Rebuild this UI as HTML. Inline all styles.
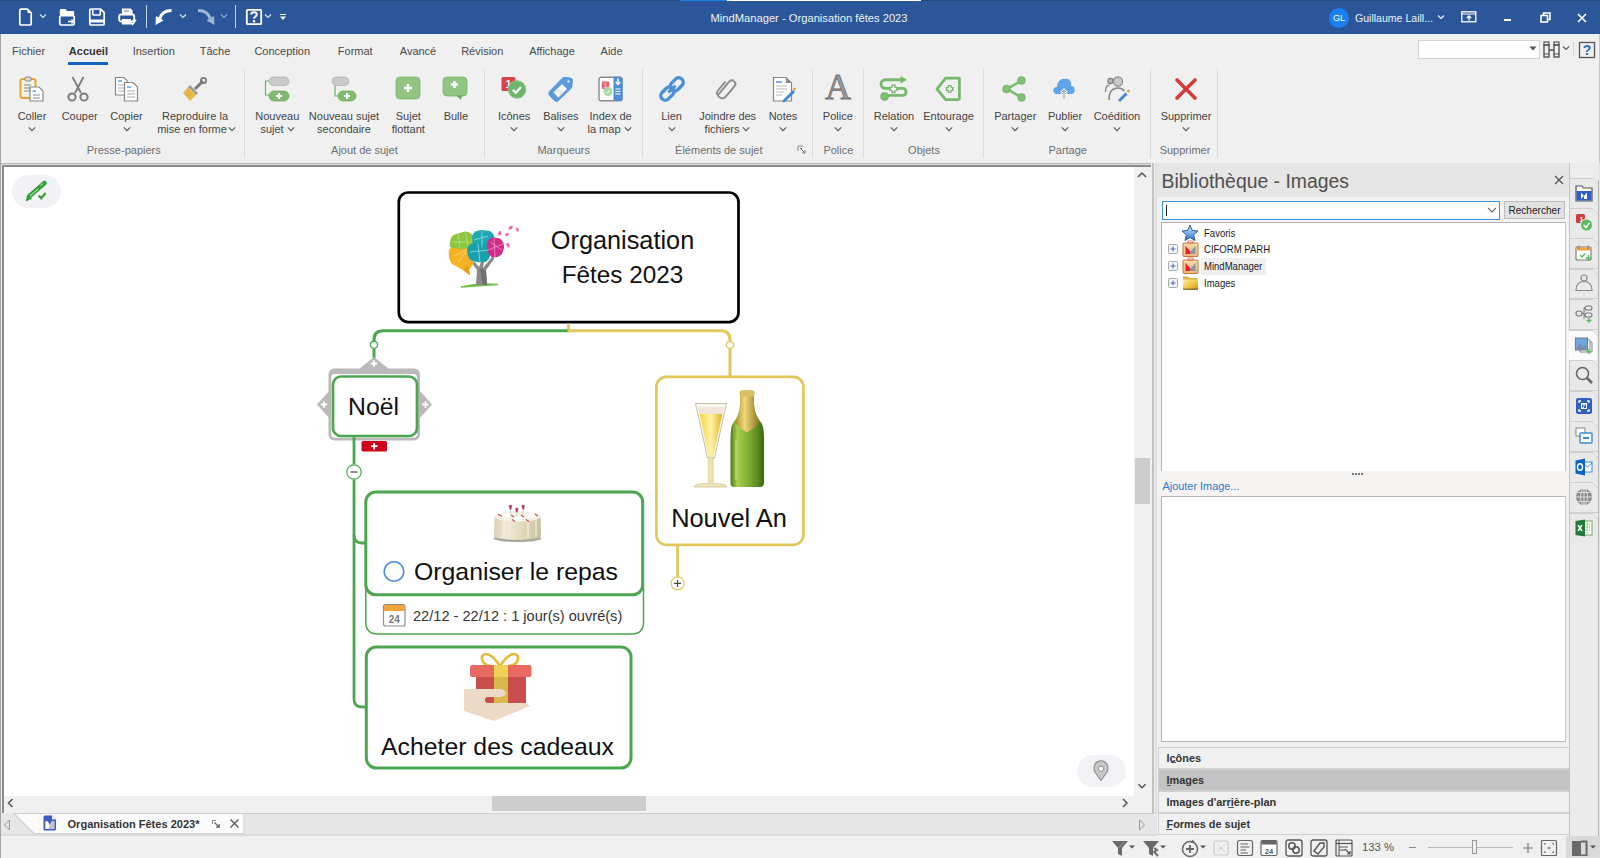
<!DOCTYPE html>
<html><head><meta charset="utf-8">
<style>
*{box-sizing:border-box}
html,body{margin:0;padding:0}
body{width:1600px;height:858px;position:relative;overflow:hidden;background:#f0f0f0;font-family:"Liberation Sans",sans-serif;color:#333}
.a{position:absolute}
.t{position:absolute;white-space:nowrap;line-height:1}
svg{overflow:visible}
</style></head><body>
<div class="a" style="left:0px;top:0px;width:1600px;height:34px;background:#2b579a;"></div>
<div class="a" style="left:0px;top:0px;width:1600px;height:1px;background:#23497f;"></div>
<div class="a" style="left:680px;top:0px;width:47px;height:1px;background:#1b7ee0;"></div>
<div class="a" style="left:727px;top:0px;width:194px;height:1px;background:#ffffff;"></div>
<div class="t" style="left:509.00px;width:600px;text-align:center;top:12.52px;font-size:11.2px;color:#eef2f8;font-weight:normal;">MindManager - Organisation fêtes 2023</div>
<svg class="a" style="left:18px;top:8px" width="16" height="18" viewBox="0 0 16 18"><path d="M1.8 2.5 Q1.8 1.2 3 1.2 H9.5 L13.2 4.9 V15.8 Q13.2 17 12 17 H3 Q1.8 17 1.8 15.8 Z" fill="none" stroke="#fff" stroke-width="1.7" stroke-linejoin="round"/><path d="M9.5 1.2 V4.9 H13.2 Z" fill="#fff"/></svg>
<svg class="a" style="left:37px;top:11px" width="12" height="10" viewBox="0 0 12 10"><path d="M3 3.5 L6 6.5 L9 3.5" fill="none" stroke="#dfe7f3" stroke-width="1.1"/></svg>
<svg class="a" style="left:58px;top:8px" width="18" height="18" viewBox="0 0 18 18"><path d="M1.8 2.2 Q1.8 1 3 1 H7.5 L9 3 H15 Q16.2 3 16.2 4.2 V8.5 H1.8 Z" fill="#fff"/><path d="M1.8 8 V15.8 Q1.8 17 3 17 H15 Q16.2 17 16.2 15.8 V8" fill="none" stroke="#fff" stroke-width="1.7"/><path d="M10 13.5 H15.5 M13.5 11.5 L15.5 13.5 L13.5 15.5" stroke="#fff" stroke-width="1.3" fill="none"/></svg>
<svg class="a" style="left:88px;top:8px" width="18" height="18" viewBox="0 0 18 18"><path d="M1.8 2.2 Q1.8 1 3 1 H12.5 L16.2 4.7 V15.8 Q16.2 17 15 17 H3 Q1.8 17 1.8 15.8 Z" fill="none" stroke="#fff" stroke-width="1.7" stroke-linejoin="round"/><path d="M4.8 1.5 V6.2 Q4.8 7 5.6 7 H11.5 Q12.3 7 12.3 6.2 V1.5" fill="none" stroke="#fff" stroke-width="1.5"/><rect x="2" y="11.5" width="14" height="3" fill="#fff"/></svg>
<svg class="a" style="left:118px;top:8px" width="20" height="18" viewBox="0 0 20 18"><path d="M4.5 6 V1.2 H12.5 L14 2.7 V6" fill="#fff" stroke="#fff" stroke-width="1.2"/><path d="M6 3 H11" stroke="#2b579a" stroke-width="0.8"/><rect x="1.2" y="6.5" width="15" height="7" rx="2" fill="none" stroke="#fff" stroke-width="1.9"/><rect x="4" y="11" width="9" height="5.5" fill="#fff"/><path d="M12.5 14 L14.5 16.5 L18 11.8" fill="none" stroke="#fff" stroke-width="1.6"/></svg>
<div class="a" style="left:146px;top:5px;width:1px;height:23px;background:#c9d5e8;"></div>
<svg class="a" style="left:154px;top:9px" width="20" height="17" viewBox="0 0 20 17"><path d="M17.5 1.5 C11 1.5 7 5 5.5 10" fill="none" stroke="#fff" stroke-width="3.2"/><path d="M1.5 16 L2 7 L9.5 11.5 Z" fill="#fff"/></svg>
<svg class="a" style="left:176.5px;top:10.5px" width="12" height="10" viewBox="0 0 12 10"><path d="M3 3.5 L6 6.5 L9 3.5" fill="none" stroke="#dfe7f3" stroke-width="1.1"/></svg>
<svg class="a" style="left:197px;top:9px" width="20" height="17" viewBox="0 0 20 17"><path d="M1 1.5 C8 1.5 12 5 13.5 10" fill="none" stroke="#9fb5d6" stroke-width="3.2"/><path d="M17.5 16 L17 7 L9.5 11.5 Z" fill="#9fb5d6"/></svg>
<svg class="a" style="left:218px;top:10.5px" width="12" height="10" viewBox="0 0 12 10"><path d="M3 3.5 L6 6.5 L9 3.5" fill="none" stroke="#8ea6cc" stroke-width="1.1"/></svg>
<div class="a" style="left:235px;top:5px;width:1px;height:23px;background:#c9d5e8;"></div>
<svg class="a" style="left:245px;top:8px" width="18" height="18" viewBox="0 0 18 18"><rect x="1.8" y="1.8" width="14.4" height="14.4" rx="1" fill="none" stroke="#fff" stroke-width="1.8"/><path d="M6.2 6.5 C6.2 3.5 11.8 3.5 11.8 6.5 C11.8 8.5 9 8.5 9 10.8" fill="none" stroke="#fff" stroke-width="2"/><circle cx="9" cy="13.2" r="1.2" fill="#fff"/></svg>
<svg class="a" style="left:262px;top:10.5px" width="12" height="10" viewBox="0 0 12 10"><path d="M3 3.5 L6 6.5 L9 3.5" fill="none" stroke="#dfe7f3" stroke-width="1.1"/></svg>
<svg class="a" style="left:279px;top:13px" width="8" height="8" viewBox="0 0 8 8"><path d="M1 1.5 H7" stroke="#fff" stroke-width="1"/><path d="M1 3.5 H7 L4 7 Z" fill="#fff"/></svg>
<svg class="a" style="left:1328px;top:7px" width="22" height="22" viewBox="0 0 22 22"><circle cx="11" cy="11" r="10" fill="#1a7ff0"/><text x="11" y="14.3" text-anchor="middle" font-family="Liberation Sans" font-size="9" fill="#fff">GL</text></svg>
<div class="t" style="left:1355.00px;top:12.57px;font-size:10.55px;color:#eef2f8;font-weight:normal;">Guillaume Laill...</div>
<svg class="a" style="left:1434.5px;top:12px" width="12" height="10" viewBox="0 0 12 10"><path d="M3 3.5 L6 6.5 L9 3.5" fill="none" stroke="#eef2f8" stroke-width="1.2"/></svg>
<svg class="a" style="left:1461px;top:11px" width="16" height="12" viewBox="0 0 16 12"><rect x="0.8" y="0.8" width="14" height="10" fill="none" stroke="#fff" stroke-width="1.3"/><path d="M1 3 H15" stroke="#fff" stroke-width="1"/><path d="M8 9.5 V5 M5.8 7 L8 4.8 L10.2 7" fill="none" stroke="#fff" stroke-width="1.3"/></svg>
<div class="a" style="left:1504px;top:19px;width:7px;height:2px;background:#fff;"></div>
<svg class="a" style="left:1540px;top:12px" width="11" height="11" viewBox="0 0 11 11"><rect x="1" y="3.5" width="6.5" height="6.5" fill="none" stroke="#fff" stroke-width="1.6"/><path d="M3.5 3.5 V1 H10 V7.5 H7.5" fill="none" stroke="#fff" stroke-width="1.6"/></svg>
<svg class="a" style="left:1577px;top:13px" width="10" height="10" viewBox="0 0 10 10"><path d="M1 1 L9 9 M9 1 L1 9" stroke="#fff" stroke-width="1.6"/></svg>
<div class="a" style="left:0px;top:34px;width:1px;height:130px;background:#b9b9b9;"></div>
<div class="a" style="left:1599px;top:34px;width:1px;height:130px;background:#c8c8c8;"></div>
<div class="t" style="left:-271.40px;width:600px;text-align:center;top:46.19px;font-size:11px;color:#4a4a4a;font-weight:normal;">Fichier</div>
<div class="t" style="left:-211.60px;width:600px;text-align:center;top:46.19px;font-size:11px;color:#333;font-weight:bold;">Accueil</div>
<div class="t" style="left:-146.25px;width:600px;text-align:center;top:46.19px;font-size:11px;color:#4a4a4a;font-weight:normal;">Insertion</div>
<div class="t" style="left:-85.00px;width:600px;text-align:center;top:46.19px;font-size:11px;color:#4a4a4a;font-weight:normal;">Tâche</div>
<div class="t" style="left:-17.75px;width:600px;text-align:center;top:46.19px;font-size:11px;color:#4a4a4a;font-weight:normal;">Conception</div>
<div class="t" style="left:55.25px;width:600px;text-align:center;top:46.19px;font-size:11px;color:#4a4a4a;font-weight:normal;">Format</div>
<div class="t" style="left:118.00px;width:600px;text-align:center;top:46.19px;font-size:11px;color:#4a4a4a;font-weight:normal;">Avancé</div>
<div class="t" style="left:182.25px;width:600px;text-align:center;top:46.19px;font-size:11px;color:#4a4a4a;font-weight:normal;">Révision</div>
<div class="t" style="left:252.00px;width:600px;text-align:center;top:46.19px;font-size:11px;color:#4a4a4a;font-weight:normal;">Affichage</div>
<div class="t" style="left:311.60px;width:600px;text-align:center;top:46.19px;font-size:11px;color:#4a4a4a;font-weight:normal;">Aide</div>
<div class="a" style="left:68px;top:62px;width:40px;height:3px;background:#1565c7;"></div>
<div class="a" style="left:1418px;top:40px;width:122px;height:19px;background:#fdfdfd;border:1px solid #d4d4d4"></div>
<svg class="a" style="left:1529px;top:46px" width="8" height="5" viewBox="0 0 8 5"><path d="M0.5 0.5 H7.5 L4 4.5Z" fill="#555"/></svg>
<svg class="a" style="left:1543px;top:41px" width="18" height="18" viewBox="0 0 18 18"><rect x="1" y="1" width="5" height="3" fill="none" stroke="#555" stroke-width="1.2"/><rect x="11" y="1" width="5" height="3" fill="none" stroke="#555" stroke-width="1.2"/><rect x="1" y="4" width="5" height="12" fill="none" stroke="#555" stroke-width="1.4"/><rect x="11" y="4" width="5" height="12" fill="none" stroke="#555" stroke-width="1.4"/><path d="M6 9 H11" stroke="#555" stroke-width="1.6"/><path d="M1 13 H6 M11 13 H16" stroke="#555" stroke-width="1"/></svg>
<svg class="a" style="left:1559.5px;top:43px" width="12" height="10" viewBox="0 0 12 10"><path d="M3 3.5 L6 6.5 L9 3.5" fill="none" stroke="#555" stroke-width="1.1"/></svg>
<div class="a" style="left:1573px;top:42px;width:1px;height:14px;background:#d8d8d8;"></div>
<svg class="a" style="left:1578px;top:41px" width="18" height="18" viewBox="0 0 18 18"><rect x="1.5" y="1.5" width="15" height="15" fill="none" stroke="#555" stroke-width="1.3"/><text x="9" y="14" text-anchor="middle" font-family="Liberation Sans" font-size="14" font-weight="bold" fill="#2a6bc9">?</text></svg>
<div class="a" style="left:244px;top:69px;width:1px;height:89px;background:#dadada;"></div>
<div class="a" style="left:484px;top:69px;width:1px;height:89px;background:#dadada;"></div>
<div class="a" style="left:642px;top:69px;width:1px;height:89px;background:#dadada;"></div>
<div class="a" style="left:812px;top:69px;width:1px;height:89px;background:#dadada;"></div>
<div class="a" style="left:863px;top:69px;width:1px;height:89px;background:#dadada;"></div>
<div class="a" style="left:983px;top:69px;width:1px;height:89px;background:#dadada;"></div>
<div class="a" style="left:1150px;top:69px;width:1px;height:89px;background:#dadada;"></div>
<div class="a" style="left:1217px;top:69px;width:1px;height:89px;background:#dadada;"></div>
<svg class="a" style="left:19px;top:76px" width="26" height="26" viewBox="0 0 26 26"><rect x="1.5" y="3" width="15" height="19" rx="2" fill="#f6f1e6" stroke="#e6a53a" stroke-width="2"/><rect x="6" y="1" width="6" height="4" rx="1" fill="#ddd" stroke="#888" stroke-width="1"/><path d="M5 9 H12 M5 12 H11 M5 15 H12" stroke="#888" stroke-width="1"/><path d="M11 11 H20 L24 15 V25 H11 Z" fill="#fff" stroke="#888" stroke-width="1.2"/><path d="M13.5 15 H17" stroke="#4a90d9" stroke-width="1.3"/><path d="M14 19 H21 M14 22 H21" stroke="#888" stroke-width="1"/></svg>
<div class="t" style="left:-268.00px;width:600px;text-align:center;top:110.99px;font-size:11px;color:#444;font-weight:normal;">Coller</div>
<svg class="a" style="left:26px;top:123.5px" width="12" height="10" viewBox="0 0 12 10"><path d="M2.8 3.4 L6 6.6 L9.2 3.4" fill="none" stroke="#555" stroke-width="1.1"/></svg>
<svg class="a" style="left:66px;top:76px" width="26" height="26" viewBox="0 0 26 26"><path d="M6.5 1 L15 17 M17.5 1 L9 17" stroke="#7b7b7b" stroke-width="1.8" fill="none"/><circle cx="6" cy="21" r="3.6" fill="none" stroke="#7b7b7b" stroke-width="2"/><circle cx="18" cy="21" r="3.6" fill="none" stroke="#7b7b7b" stroke-width="2"/></svg>
<div class="t" style="left:-220.30px;width:600px;text-align:center;top:110.99px;font-size:11px;color:#444;font-weight:normal;">Couper</div>
<svg class="a" style="left:114px;top:76px" width="26" height="26" viewBox="0 0 26 26"><path d="M1.5 1.5 H10 L13 4.5 V19 H1.5Z" fill="#fff" stroke="#888" stroke-width="1.2"/><path d="M4 5 H8" stroke="#4a90d9" stroke-width="1.3"/><path d="M4 9 H10 M4 12 H10 M4 15 H10" stroke="#aaa" stroke-width="1"/><path d="M10.5 6.5 H19 L23.5 11 V25 H10.5Z" fill="#fff" stroke="#888" stroke-width="1.2"/><path d="M13 11 H17" stroke="#4a90d9" stroke-width="1.3"/><path d="M13 15 H21 M13 18 H21 M13 21 H21" stroke="#aaa" stroke-width="1"/></svg>
<div class="t" style="left:-173.50px;width:600px;text-align:center;top:110.99px;font-size:11px;color:#444;font-weight:normal;">Copier</div>
<svg class="a" style="left:120.5px;top:123.5px" width="12" height="10" viewBox="0 0 12 10"><path d="M2.8 3.4 L6 6.6 L9.2 3.4" fill="none" stroke="#555" stroke-width="1.1"/></svg>
<svg class="a" style="left:182px;top:76px" width="26" height="26" viewBox="0 0 26 26"><path d="M13 13 L21 5" stroke="#7a7a7a" stroke-width="3"/><circle cx="21.5" cy="4.5" r="2.6" fill="none" stroke="#7a7a7a" stroke-width="1.8"/><path d="M8 9 L16 17 L14 19 L6 11Z" fill="#9a9a9a"/><path d="M6 11 L14 19 L8 25 L1 17 Z" fill="#e9b949"/><path d="M4 17 L8 21 M6 15 L10 19" stroke="#c99a30" stroke-width="0.8"/></svg>
<div class="t" style="left:-105.00px;width:600px;text-align:center;top:110.99px;font-size:11px;color:#444;font-weight:normal;">Reproduire la</div>
<div class="t" style="left:-108.00px;width:600px;text-align:center;top:123.99px;font-size:11px;color:#444;font-weight:normal;">mise en forme</div>
<svg class="a" style="left:225.5px;top:123.5px" width="12" height="10" viewBox="0 0 12 10"><path d="M2.8 3.4 L6 6.6 L9.2 3.4" fill="none" stroke="#555" stroke-width="1.1"/></svg>
<div class="t" style="left:-176.25px;width:600px;text-align:center;top:144.99px;font-size:11px;color:#6e6e6e;font-weight:normal;">Presse-papiers</div>
<svg class="a" style="left:264px;top:76px" width="26" height="26" viewBox="0 0 26 26"><rect x="5" y="1" width="20" height="8.5" rx="4.25" fill="#c9c9c9" stroke="#a8a8a8" stroke-width="0.6"/><path d="M5 5 H1.5 V19 H5" fill="none" stroke="#6cb36c" stroke-width="1.2"/><rect x="5" y="15" width="20" height="10" rx="5" fill="#80bb72" stroke="#6aa85c" stroke-width="0.7"/><path d="M15 17 V23 M12 20 H18" stroke="#fff" stroke-width="2"/></svg>
<div class="t" style="left:-22.70px;width:600px;text-align:center;top:110.99px;font-size:11px;color:#444;font-weight:normal;">Nouveau</div>
<div class="t" style="left:-28.00px;width:600px;text-align:center;top:123.99px;font-size:11px;color:#444;font-weight:normal;">sujet</div>
<svg class="a" style="left:285px;top:123.5px" width="12" height="10" viewBox="0 0 12 10"><path d="M2.8 3.4 L6 6.6 L9.2 3.4" fill="none" stroke="#555" stroke-width="1.1"/></svg>
<svg class="a" style="left:331px;top:76px" width="26" height="26" viewBox="0 0 26 26"><rect x="1" y="1" width="17" height="8.5" rx="4.25" fill="#c9c9c9" stroke="#a8a8a8" stroke-width="0.6"/><path d="M4 9.5 V20 H7" fill="none" stroke="#6cb36c" stroke-width="1.2"/><rect x="7" y="15" width="18" height="10" rx="5" fill="#80bb72" stroke="#6aa85c" stroke-width="0.7"/><path d="M16 17 V23 M13 20 H19" stroke="#fff" stroke-width="2"/></svg>
<div class="t" style="left:44.00px;width:600px;text-align:center;top:110.99px;font-size:11px;color:#444;font-weight:normal;">Nouveau sujet</div>
<div class="t" style="left:44.00px;width:600px;text-align:center;top:123.99px;font-size:11px;color:#444;font-weight:normal;">secondaire</div>
<svg class="a" style="left:395px;top:76px" width="26" height="26" viewBox="0 0 26 26"><rect x="1" y="1" width="24" height="22" rx="4" fill="#92c484" stroke="#78b46a" stroke-width="0.8"/><path d="M13 8 V16 M9 12 H17" stroke="#fff" stroke-width="2.4"/></svg>
<div class="t" style="left:108.30px;width:600px;text-align:center;top:110.99px;font-size:11px;color:#444;font-weight:normal;">Sujet</div>
<div class="t" style="left:108.30px;width:600px;text-align:center;top:123.99px;font-size:11px;color:#444;font-weight:normal;">flottant</div>
<svg class="a" style="left:442px;top:76px" width="26" height="26" viewBox="0 0 26 26"><rect x="1" y="1" width="24" height="19" rx="4" fill="#92c484" stroke="#78b46a" stroke-width="0.8"/><path d="M14 19.5 L19 24 L20 19.5Z" fill="#6aa85c"/><path d="M12.5 5 V12 M9 8.5 H16" stroke="#fff" stroke-width="2.4"/></svg>
<div class="t" style="left:155.90px;width:600px;text-align:center;top:110.99px;font-size:11px;color:#444;font-weight:normal;">Bulle</div>
<div class="t" style="left:64.40px;width:600px;text-align:center;top:144.99px;font-size:11px;color:#6e6e6e;font-weight:normal;">Ajout de sujet</div>
<svg class="a" style="left:500px;top:76px" width="28" height="28" viewBox="0 0 28 28"><rect x="1.5" y="1" width="14" height="14" rx="1.5" fill="#d8434a"/><text x="8.5" y="12.3" text-anchor="middle" font-family="Liberation Sans" font-size="11" font-weight="bold" fill="#fff">1</text><circle cx="17" cy="13.5" r="8.8" fill="#6cb56c" stroke="#8fc98f" stroke-width="1"/><path d="M12.8 13.8 L15.8 16.8 L21 11" fill="none" stroke="#fff" stroke-width="2.2"/></svg>
<div class="t" style="left:214.10px;width:600px;text-align:center;top:110.99px;font-size:11px;color:#444;font-weight:normal;">Icônes</div>
<svg class="a" style="left:508.1px;top:123.5px" width="12" height="10" viewBox="0 0 12 10"><path d="M2.8 3.4 L6 6.6 L9.2 3.4" fill="none" stroke="#555" stroke-width="1.1"/></svg>
<svg class="a" style="left:547px;top:74px" width="28" height="28" viewBox="0 0 28 28"><path d="M2.5 17.5 L15 4.5 Q16.5 3 18.5 3.3 L24 4.2 Q25.3 4.6 25.4 6 L25 11.5 Q25 13.5 23.5 15 L11 27 Q9.5 28.3 8 27 L2.5 21.5 Q1.2 19.5 2.5 17.5 Z" fill="#5a9be0" stroke="#4a8ad5" stroke-width="0.8"/><path d="M6.5 18.5 L15 10 L20 15 L11.5 23.5 Z" fill="#fff"/><path d="M9.5 18 L12.5 15 M11 19.5 L15.5 15 M12.5 21 L16.5 17" stroke="#bdbdbd" stroke-width="0.9"/><circle cx="21.5" cy="7.5" r="1.2" fill="#dbe9f8"/></svg>
<div class="t" style="left:260.90px;width:600px;text-align:center;top:110.99px;font-size:11px;color:#444;font-weight:normal;">Balises</div>
<svg class="a" style="left:554.9px;top:123.5px" width="12" height="10" viewBox="0 0 12 10"><path d="M2.8 3.4 L6 6.6 L9.2 3.4" fill="none" stroke="#555" stroke-width="1.1"/></svg>
<svg class="a" style="left:598px;top:76px" width="26" height="26" viewBox="0 0 26 26"><rect x="1" y="1.3" width="23" height="23.5" rx="2" fill="#fff" stroke="#8a8a8a" stroke-width="1.4"/><path d="M15.5 0.8 H22 Q24.5 0.8 24.5 3.3 V22.5 Q24.5 25 22 25 H15.5 Z" fill="#4a8fd9"/><rect x="3.8" y="5.5" width="7.5" height="7.5" rx="1" fill="#e06a70"/><text x="7.5" y="11.8" text-anchor="middle" font-family="Liberation Sans" font-size="7" font-weight="bold" fill="#fbd">1</text><circle cx="10" cy="15.5" r="4.5" fill="#a9d8a9"/><path d="M8 15.5 L9.5 17 L12 14" fill="none" stroke="#e8f5e8" stroke-width="1"/><path d="M17.5 13 H22.5 M17.5 15.5 H22.5 M17.5 18 H22.5" stroke="#fff" stroke-width="1.2"/><path d="M20 2.5 V8 M17.8 6 L20 8.5 L22.2 6" stroke="#fff" stroke-width="1.6" fill="none"/></svg>
<div class="t" style="left:310.60px;width:600px;text-align:center;top:110.99px;font-size:11px;color:#444;font-weight:normal;">Index de</div>
<div class="t" style="left:304.00px;width:600px;text-align:center;top:123.99px;font-size:11px;color:#444;font-weight:normal;">la map</div>
<svg class="a" style="left:622px;top:123.5px" width="12" height="10" viewBox="0 0 12 10"><path d="M2.8 3.4 L6 6.6 L9.2 3.4" fill="none" stroke="#555" stroke-width="1.1"/></svg>
<div class="t" style="left:263.75px;width:600px;text-align:center;top:144.99px;font-size:11px;color:#6e6e6e;font-weight:normal;">Marqueurs</div>
<svg class="a" style="left:659px;top:76px" width="26" height="26" viewBox="0 0 26 26"><g transform="rotate(-45 13 13)"><rect x="-1" y="8.5" width="15" height="9" rx="4.5" fill="none" stroke="#4a90d9" stroke-width="3.4"/><rect x="12" y="8.5" width="15" height="9" rx="4.5" fill="none" stroke="#4a90d9" stroke-width="3.4"/><path d="M8 13 H18" stroke="#4a90d9" stroke-width="3"/></g></svg>
<div class="t" style="left:371.60px;width:600px;text-align:center;top:110.99px;font-size:11px;color:#444;font-weight:normal;">Lien</div>
<svg class="a" style="left:665.6px;top:123.5px" width="12" height="10" viewBox="0 0 12 10"><path d="M2.8 3.4 L6 6.6 L9.2 3.4" fill="none" stroke="#555" stroke-width="1.1"/></svg>
<svg class="a" style="left:714px;top:76px" width="26" height="26" viewBox="0 0 26 26"><g transform="rotate(40 13 13)"><path d="M10 22 V6 C10 1.5 17 1.5 17 6 V20 C17 25.5 7 25.5 7 20 V9" fill="none" stroke="#8a8a8a" stroke-width="1.9" stroke-linecap="round"/></g></svg>
<div class="t" style="left:427.70px;width:600px;text-align:center;top:110.99px;font-size:11px;color:#444;font-weight:normal;">Joindre des</div>
<div class="t" style="left:422.00px;width:600px;text-align:center;top:123.99px;font-size:11px;color:#444;font-weight:normal;">fichiers</div>
<svg class="a" style="left:739.5px;top:123.5px" width="12" height="10" viewBox="0 0 12 10"><path d="M2.8 3.4 L6 6.6 L9.2 3.4" fill="none" stroke="#555" stroke-width="1.1"/></svg>
<svg class="a" style="left:772px;top:76px" width="26" height="26" viewBox="0 0 26 26"><path d="M1.5 1.5 H14 L19.5 7 V25 H1.5Z" fill="#fff" stroke="#888" stroke-width="1.2"/><path d="M14 1.5 V7 H19.5" fill="#888"/><path d="M4 6 H10" stroke="#4a90d9" stroke-width="1.4"/><path d="M4 10 H15 M4 13 H15 M4 16 H12 M4 19 H10" stroke="#bbb" stroke-width="1"/><path d="M11 24 L21 14 L23 16 L13 26 L10.5 26.5Z" fill="#3d85d6"/><circle cx="22.5" cy="13" r="1.5" fill="#e8a33a"/></svg>
<div class="t" style="left:483.00px;width:600px;text-align:center;top:110.99px;font-size:11px;color:#444;font-weight:normal;">Notes</div>
<svg class="a" style="left:777px;top:123.5px" width="12" height="10" viewBox="0 0 12 10"><path d="M2.8 3.4 L6 6.6 L9.2 3.4" fill="none" stroke="#555" stroke-width="1.1"/></svg>
<div class="a" style="left:801px;top:148px;width:1px;height:1px;background:#777;"></div>
<svg class="a" style="left:797px;top:145px" width="10" height="10" viewBox="0 0 10 10"><path d="M1 1 H6 M1 1 V6" stroke="#888" stroke-width="1"/><path d="M3 3 L8 8 M5 8 H8 V5" stroke="#777" stroke-width="1" fill="none"/></svg>
<div class="t" style="left:418.80px;width:600px;text-align:center;top:144.99px;font-size:11px;color:#6e6e6e;font-weight:normal;">Éléments de sujet</div>
<div class="t" style="left:818px;top:69px;width:40px;text-align:center;font-family:'Liberation Serif',serif;font-size:36px;color:#9a9a9a;-webkit-text-stroke:0.8px #707070">A</div>
<div class="t" style="left:537.80px;width:600px;text-align:center;top:110.99px;font-size:11px;color:#444;font-weight:normal;">Police</div>
<svg class="a" style="left:831.8px;top:123.5px" width="12" height="10" viewBox="0 0 12 10"><path d="M2.8 3.4 L6 6.6 L9.2 3.4" fill="none" stroke="#555" stroke-width="1.1"/></svg>
<div class="t" style="left:538.40px;width:600px;text-align:center;top:144.99px;font-size:11px;color:#6e6e6e;font-weight:normal;">Police</div>
<svg class="a" style="left:876px;top:74px" width="34" height="28" viewBox="0 0 34 28"><path d="M26 5.7 H9.4 A4.35 4.35 0 0 0 9.4 14.4 H26.6 A3.5 3.5 0 0 1 26.6 21.4 H8.6" fill="none" stroke="#78b86c" stroke-width="2.9"/><path d="M24.5 2 L31 5.7 L24.5 9.4 Z" fill="#78b86c"/><circle cx="8.6" cy="22.4" r="4" fill="#80bd74" stroke="#6aa85e" stroke-width="0.6"/><path d="M17.5 10.5 V19.3 M13.1 14.9 H21.9" stroke="#78b86c" stroke-width="4.2"/><path d="M17.5 12.2 V17.6 M14.8 14.9 H20.2" stroke="#fff" stroke-width="1.8"/></svg>
<div class="t" style="left:594.00px;width:600px;text-align:center;top:110.99px;font-size:11px;color:#444;font-weight:normal;">Relation</div>
<svg class="a" style="left:888px;top:123.5px" width="12" height="10" viewBox="0 0 12 10"><path d="M2.8 3.4 L6 6.6 L9.2 3.4" fill="none" stroke="#555" stroke-width="1.1"/></svg>
<svg class="a" style="left:934px;top:75px" width="28" height="28" viewBox="0 0 28 28"><path d="M25.4 3.8 V23.6 Q25.4 24.6 24.4 24.6 H11.6 L3 14 L11.6 3.1 H24.4 Q25.4 3.1 25.4 3.8 Z" fill="none" stroke="#78b86c" stroke-width="2.8" stroke-linejoin="round"/><path d="M15.7 10 V17.8 M11.8 13.9 H19.6" stroke="#78b86c" stroke-width="4"/><path d="M15.7 11.6 V16.2 M13.4 13.9 H18" stroke="#fff" stroke-width="1.7"/></svg>
<div class="t" style="left:648.60px;width:600px;text-align:center;top:110.99px;font-size:11px;color:#444;font-weight:normal;">Entourage</div>
<svg class="a" style="left:942.6px;top:123.5px" width="12" height="10" viewBox="0 0 12 10"><path d="M2.8 3.4 L6 6.6 L9.2 3.4" fill="none" stroke="#555" stroke-width="1.1"/></svg>
<div class="t" style="left:624.00px;width:600px;text-align:center;top:144.99px;font-size:11px;color:#6e6e6e;font-weight:normal;">Objets</div>
<svg class="a" style="left:1002px;top:76px" width="26" height="26" viewBox="0 0 26 26"><path d="M5 13 L19 5 M5 13 L19 21" stroke="#78b86e" stroke-width="2.4"/><circle cx="4.5" cy="13" r="3.9" fill="#82c078" stroke="#6aa860" stroke-width="0.6"/><circle cx="19.5" cy="4.5" r="3.9" fill="#82c078" stroke="#6aa860" stroke-width="0.6"/><circle cx="19.5" cy="21.5" r="3.9" fill="#82c078" stroke="#6aa860" stroke-width="0.6"/></svg>
<div class="t" style="left:715.25px;width:600px;text-align:center;top:110.99px;font-size:11px;color:#444;font-weight:normal;">Partager</div>
<svg class="a" style="left:1009.25px;top:123.5px" width="12" height="10" viewBox="0 0 12 10"><path d="M2.8 3.4 L6 6.6 L9.2 3.4" fill="none" stroke="#555" stroke-width="1.1"/></svg>
<svg class="a" style="left:1051px;top:76px" width="26" height="26" viewBox="0 0 26 26"><path d="M6 18 C1 18 1 11 6 11 C6 5 11 2 14 3 C18 2 21 6 20 10 C25 10 25 18 20 18 Z" fill="#5ea4ea"/><path d="M13 23 V14 M10 17 L13 14 L16 17" fill="none" stroke="#fff" stroke-width="2.6"/><path d="M13 23 V14 M10.5 16.5 L13 14 L15.5 16.5" fill="none" stroke="#888" stroke-width="1"/></svg>
<div class="t" style="left:765.00px;width:600px;text-align:center;top:110.99px;font-size:11px;color:#444;font-weight:normal;">Publier</div>
<svg class="a" style="left:1059px;top:123.5px" width="12" height="10" viewBox="0 0 12 10"><path d="M2.8 3.4 L6 6.6 L9.2 3.4" fill="none" stroke="#555" stroke-width="1.1"/></svg>
<svg class="a" style="left:1104px;top:76px" width="26" height="26" viewBox="0 0 26 26"><circle cx="6.5" cy="5" r="2.6" fill="#bbb" stroke="#7a7a7a" stroke-width="1.1"/><path d="M1.5 16 C1.5 11 3 9 5.5 9" fill="none" stroke="#8a8a8a" stroke-width="1.3"/><circle cx="14" cy="5.5" r="4.6" fill="#c8c8c8" stroke="#8a8a8a" stroke-width="1.2"/><path d="M5 24 C5 15 9 12 14 12 C17 12 19 13 20.5 15" fill="none" stroke="#8a8a8a" stroke-width="1.6"/><path d="M14 24 L21.5 16.5 L23.5 18.5 L16 26 Z" fill="#3d85d6"/><circle cx="24.5" cy="15" r="1.5" fill="#e8a33a"/></svg>
<div class="t" style="left:816.90px;width:600px;text-align:center;top:110.99px;font-size:11px;color:#444;font-weight:normal;">Coédition</div>
<svg class="a" style="left:1110.9px;top:123.5px" width="12" height="10" viewBox="0 0 12 10"><path d="M2.8 3.4 L6 6.6 L9.2 3.4" fill="none" stroke="#555" stroke-width="1.1"/></svg>
<div class="t" style="left:767.70px;width:600px;text-align:center;top:144.99px;font-size:11px;color:#6e6e6e;font-weight:normal;">Partage</div>
<svg class="a" style="left:1173px;top:76px" width="26" height="26" viewBox="0 0 26 26"><path d="M4 4 L22 22 M22 4 L4 22" stroke="#d43c3c" stroke-width="3.6" stroke-linecap="round"/></svg>
<div class="t" style="left:886.00px;width:600px;text-align:center;top:110.99px;font-size:11px;color:#444;font-weight:normal;">Supprimer</div>
<svg class="a" style="left:1180px;top:123.5px" width="12" height="10" viewBox="0 0 12 10"><path d="M2.8 3.4 L6 6.6 L9.2 3.4" fill="none" stroke="#555" stroke-width="1.1"/></svg>
<div class="t" style="left:885.00px;width:600px;text-align:center;top:144.99px;font-size:11px;color:#6e6e6e;font-weight:normal;">Supprimer</div>
<div class="a" style="left:0px;top:163px;width:1151px;height:1px;background:#b8b8b8;"></div>
<div class="a" style="left:0px;top:164px;width:1151px;height:1px;background:#dcdcdc;"></div>
<div class="a" style="left:2px;top:165px;width:1149px;height:2px;background:#8c8c8c;"></div>
<div class="a" style="left:0px;top:163px;width:1px;height:673px;background:#9a9a9a;"></div>
<div class="a" style="left:2px;top:165px;width:2px;height:648px;background:#8c8c8c;"></div>
<div class="a" style="left:4px;top:167px;width:1130px;height:629px;background:#ffffff;"></div>
<div class="a" style="left:1134px;top:167px;width:17px;height:629px;background:#f0f0f0;"></div>
<svg class="a" style="left:1136px;top:170px" width="12" height="10" viewBox="0 0 12 10"><path d="M2 7 L6 3 L10 7" fill="none" stroke="#555" stroke-width="1.5"/></svg>
<svg class="a" style="left:1136px;top:781px" width="12" height="10" viewBox="0 0 12 10"><path d="M2.5 3.25 L6 6.75 L9.5 3.25" fill="none" stroke="#555" stroke-width="1.5"/></svg>
<div class="a" style="left:1135px;top:458px;width:15px;height:46px;background:#cdcdcd;"></div>
<div class="a" style="left:1151px;top:163px;width:1px;height:650px;background:#c4c4c4;"></div>
<div class="a" style="left:1152px;top:165px;width:2px;height:648px;background:#a8a8a8;"></div>
<div class="a" style="left:4px;top:796px;width:1130px;height:17px;background:#f0f0f0;"></div>
<svg class="a" style="left:5px;top:797px" width="12" height="12" viewBox="0 0 12 12"><path d="M7.5 2 L3.5 6 L7.5 10" fill="none" stroke="#555" stroke-width="1.5"/></svg>
<svg class="a" style="left:1119px;top:797px" width="12" height="12" viewBox="0 0 12 12"><path d="M4 2 L8 6 L4 10" fill="none" stroke="#555" stroke-width="1.5"/></svg>
<div class="a" style="left:492px;top:796px;width:154px;height:15px;background:#cdcdcd;"></div>
<div class="a" style="left:1134px;top:796px;width:17px;height:17px;background:#f0f0f0;"></div>
<div class="a" style="left:12px;top:175px;width:49px;height:33px;background:#f2f2f6;border-radius:17px"></div>
<svg class="a" style="left:0px;top:0px" width="60" height="220" viewBox="0 0 60 220"><path d="M29 196.5 L44.5 183" stroke="#33a33a" stroke-width="4.6" stroke-linecap="round"/><path d="M26.5 200.5 L28 195.5 L31 198.5 Z" fill="#33a33a" stroke="#33a33a" stroke-width="1.2" stroke-linejoin="round"/><path d="M30 196 L38 189" stroke="#dff0df" stroke-width="1"/><path d="M40.5 185.5 L42.5 184" stroke="#dff0df" stroke-width="1"/><path d="M38.8 195.5 L41.2 198.3 L45.6 193" fill="none" stroke="#33a33a" stroke-width="2.3"/></svg>
<div class="a" style="left:1077px;top:755px;width:49px;height:32px;background:#f3f3f7;border-radius:16px"></div>
<svg class="a" style="left:1092px;top:759px" width="18" height="24" viewBox="0 0 18 24"><path d="M9 21.5 L3.3 13.5 C0.5 9 2.5 1.8 9 1.8 C15.5 1.8 17.5 9 14.7 13.5 Z" fill="#c6c6c6" stroke="#8c8c8c" stroke-width="1.1" stroke-linejoin="round"/><circle cx="9" cy="9.8" r="2.6" fill="#fff" stroke="#8c8c8c" stroke-width="1"/></svg>
<svg class="a" style="left:0;top:0" width="1600" height="858" viewBox="0 0 1600 858"><rect x="398.8" y="192.5" width="339.7" height="129.6" rx="9.5" fill="#fff" stroke="#000" stroke-width="2.7"/><path d="M568.5 323.4 V330.8" stroke="#e2c75c" stroke-width="2.8"/><path d="M569.5 330.8 H383 Q374 330.8 374 339.8 V341" fill="none" stroke="#4ca64f" stroke-width="3"/><path d="M374 348.5 V369" fill="none" stroke="#4ca64f" stroke-width="3"/><circle cx="374" cy="344.8" r="3.6" fill="#fff" stroke="#4ca64f" stroke-width="1.4"/><path d="M567.5 330.8 H721 Q730 330.8 730 339.8 V341" fill="none" stroke="#e2c75c" stroke-width="3"/><path d="M730 348.5 V376" fill="none" stroke="#e2c75c" stroke-width="3"/><circle cx="730" cy="344.8" r="3.6" fill="#fff" stroke="#e2c75c" stroke-width="1.4"/><path d="M359 369 L374 357 L389 369 Z" fill="#bababa"/><rect x="328.5" y="368.5" width="91.5" height="72" rx="6" fill="#bababa"/><rect x="331.2" y="374" width="86" height="63.8" rx="4" fill="#fff"/><path d="M329 391 L317 404.5 L329 418 Z" fill="#bababa"/><path d="M420 391 L432 404.5 L420 418 Z" fill="#bababa"/><path d="M374 360.3 V366.7 M370.8 363.5 H377.2" stroke="#fff" stroke-width="1.8"/><path d="M324 401.3 V407.7 M320.8 404.5 H327.2" stroke="#fff" stroke-width="1.8"/><path d="M425.5 401.3 V407.7 M422.3 404.5 H428.7" stroke="#fff" stroke-width="1.8"/><rect x="333" y="376.5" width="84" height="59.5" rx="8" fill="#fff" stroke="#4ca64f" stroke-width="2.7"/><rect x="361.5" y="441" width="25.5" height="10.5" rx="1.5" fill="#d0021b"/><path d="M374.2 443 V449.5 M371 446.2 H377.5" stroke="#fff" stroke-width="1.8"/><path d="M354 437 V464.5 M354 479.5 V699 Q354 707 362 707 H366" fill="none" stroke="#4ca64f" stroke-width="2.8"/><path d="M354 535 Q354 543 362 543 H366" fill="none" stroke="#4ca64f" stroke-width="2.8"/><circle cx="354" cy="472" r="7.2" fill="#fff" stroke="#4ca64f" stroke-width="1.2"/><path d="M350.5 472 H357.5" stroke="#555" stroke-width="1.3"/><path d="M365.8 585 V622 Q365.8 634 377.8 634 H631.5 Q643.5 634 643.5 622 V585" fill="#fff" stroke="#4ca64f" stroke-width="1.5"/><rect x="365.8" y="491.9" width="276.9" height="102.9" rx="10" fill="#fff" stroke="#4ca64f" stroke-width="3"/><circle cx="394" cy="571.5" r="9.8" fill="none" stroke="#4a8fe0" stroke-width="1.6"/><rect x="366.3" y="647" width="264.7" height="121" rx="10" fill="#fff" stroke="#4ca64f" stroke-width="3"/><rect x="656.4" y="376.8" width="147" height="168" rx="10" fill="#fff" stroke="#e2c75c" stroke-width="2.7"/><path d="M677.6 546 V576.8" stroke="#e2c75c" stroke-width="2.8"/><circle cx="677.6" cy="583.4" r="6.5" fill="#fff" stroke="#e2c75c" stroke-width="1.2"/><path d="M677.6 579.9 V586.9 M674.1 583.4 H681.1" stroke="#444" stroke-width="1.1"/><g>
<path d="M461 287 Q478 283 498 284.5 Q478 285.5 461 287 Z" fill="#6cc04a" stroke="#6cc04a" stroke-width="1.5"/>
<path d="M476 285 L477 270 L471 262 L473.5 260.5 L479 267 L481 262 L484 261 L483 268 L492 257 L494.5 258.5 L486 270 L487 285 Z" fill="#8a8a8a"/>
<path d="M480 268 L482.5 285 H487 L486 270Z" fill="#707070"/>
<path d="M449 251 Q450 246 456 246.5 L468 247 Q475 249 475 256 L474 263 L469 270 L470 275 L463 270 L452 264 Q448 259 449 251 Z" fill="#f5b324"/>
<path d="M463 270 L470 275.5 L468 266 Z" fill="#e89a10"/>
<path d="M454 256 L468 249 M458 262 L466 252 L473 262" stroke="#fde6a0" stroke-width="0.7" fill="none"/>
<path d="M450 243 Q450 236 456 234 L465 231.5 Q472 232 473.5 238 L473 247 L462 249 L452 248 Q449 247 450 243 Z" fill="#8dc63f"/>
<path d="M452 242 H472 M458 233 L460 248 M466 233 L468 247" stroke="#c9e89a" stroke-width="0.6" fill="none"/>
<path d="M472 236 Q474 230 482 230 L490 231 Q495 234 494.5 240 L492 247 L480 248 L473 246 Z" fill="#1fa8b3"/>
<path d="M467 249 Q468 244 474 243.5 L484 244 Q491 246 491 252 L489 259 Q486 263 480 262.5 L472 261 Q467 258 467 249 Z" fill="#18a0ac"/>
<path d="M474 240 L488 236 M482 231 L482 247 M470 252 L489 250 M478 244 L480 262" stroke="#bfeef2" stroke-width="0.6" fill="none"/>
<path d="M487 244 Q488 238 494 237.5 L500 238.5 Q504.5 242 504 248 L502 254 Q498 258 492 257.5 L488 253 Z" fill="#d12c8a"/>
<path d="M490 242 L502 250 M494 238 L495 257 M488 250 L503 244" stroke="#f4b8dc" stroke-width="0.6" fill="none"/>
<ellipse cx="499.8" cy="233.3" rx="1.6" ry="2.4" transform="rotate(30 499.8 233.3)" fill="#ea6db0"/>
<ellipse cx="510.7" cy="227.8" rx="1.6" ry="2.3" transform="rotate(50 510.7 227.8)" fill="#ea6db0"/>
<ellipse cx="517.4" cy="229.6" rx="1.3" ry="2.2" transform="rotate(-20 517.4 229.6)" fill="#ea6db0"/>
<ellipse cx="507" cy="234.5" rx="1.4" ry="2" transform="rotate(70 507 234.5)" fill="#ea6db0"/>
<ellipse cx="508" cy="245.3" rx="1.5" ry="2.3" transform="rotate(-30 508 245.3)" fill="#ea6db0"/>
</g><defs>
<linearGradient id="btl" x1="0" x2="1" y1="0" y2="0"><stop offset="0" stop-color="#4a7a16"/><stop offset="0.2" stop-color="#a8cf50"/><stop offset="0.5" stop-color="#84b236"/><stop offset="0.8" stop-color="#5c8c22"/><stop offset="1" stop-color="#3d6412"/></linearGradient>
<linearGradient id="gld" x1="0" x2="1"><stop offset="0" stop-color="#a78a2a"/><stop offset="0.4" stop-color="#f0d878"/><stop offset="1" stop-color="#8a6d1e"/></linearGradient>
<linearGradient id="wine" x1="0" x2="1"><stop offset="0" stop-color="#f2d640"/><stop offset="0.5" stop-color="#fff3a8"/><stop offset="1" stop-color="#e0b520"/></linearGradient>
<linearGradient id="cake" x1="0" x2="1"><stop offset="0" stop-color="#d8d2b8"/><stop offset="0.3" stop-color="#f0ead6"/><stop offset="0.7" stop-color="#dcd3b2"/><stop offset="1" stop-color="#c8bf9c"/></linearGradient>
</defs><path d="M695.5 403.5 H726.5 L714.5 458 H707.5 Z" fill="#faf7ec" stroke="#bdb8a6" stroke-width="0.9"/>
<path d="M698 407 H724 L722.3 414 H699.6 Z" fill="#f0e4dc"/>
<path d="M699.6 414 H722.3 L713.5 456 H708.5 Z" fill="url(#wine)"/>
<path d="M708.3 457 H713.2 V482 H708.3 Z" fill="#efe3a8" stroke="#cbbf80" stroke-width="0.5"/>
<path d="M694 487 C694 482 727 482 727 487 Z" fill="#efe6bc" stroke="#c9bd8a" stroke-width="0.7"/>
<path d="M740 394 Q740 390.5 743 390.5 H751 Q754 390.5 754 394 V404 Q754 414 762 424 Q764 428 764 440 V483 Q764 487 760 487 H734 Q730.5 487 730.5 483 V440 Q730.5 428 732.5 424 Q740 414 740 404 Z" fill="url(#btl)"/>
<path d="M740 394 Q740 390.5 743 390.5 H751 Q754 390.5 754 394 V404 Q754 414 760 422 L754 428 L747 432.5 L740 428 L734.5 422 Q740 414 740 404 Z" fill="url(#gld)"/>
<rect x="739.5" y="390.5" width="15" height="6" rx="2" fill="#d8c060"/>
<path d="M736 440 V480" stroke="#c8e07a" stroke-width="1.6" opacity="0.7"/><ellipse cx="517.5" cy="538.5" rx="24" ry="3.5" fill="#a9a69a"/>
<path d="M494.5 516.5 L494 536 C494 541 541 541 541 536 L540.5 516.5 Z" fill="url(#cake)"/>
<path d="M504 520 V538 M528 520 V538 M536 518 V537" stroke="#fbf8ee" stroke-width="1.2" opacity="0.8"/>
<ellipse cx="517.5" cy="516.5" rx="23" ry="5.2" fill="#f4f0e2"/>
<ellipse cx="505" cy="515.5" rx="5" ry="2" fill="#fff"/>
<ellipse cx="530" cy="515.5" rx="5" ry="2" fill="#fff"/>
<ellipse cx="518" cy="519" rx="5" ry="2" fill="#fff"/>
<path d="M498 514 L502 516.5 M535 514 L538 516 M512 519.5 L515 521.5 M526 519.5 L529 521.5 M511 515 L514 517 M521 515 L524 517" stroke="#c0505a" stroke-width="1.1"/>
<path d="M508.7 505 H512.3 L511.2 509.8 H509.8 Z M515 508 H518.6 L517.5 512.5 H516.1 Z M521.4 505 H525 L523.9 509.8 H522.5 Z" fill="#a83248" stroke="#ddd" stroke-width="0.4"/>
<path d="M510.5 509.8 V513.5 M516.8 512.5 V515.5 M523.2 509.8 V513.5" stroke="#bbb" stroke-width="0.7"/><path d="M492 666 C481 666 479 654 486 654 C491 654 496 660 500 666 C504 660 509 654 514 654 C521 654 519 666 508 666" fill="none" stroke="#e5b83a" stroke-width="2.6"/>
<rect x="476" y="677" width="50" height="27" fill="#c94d4d"/>
<rect x="494" y="665" width="14" height="39" fill="#d9b94a"/>
<rect x="470" y="665" width="61.5" height="12" rx="2" fill="#e8695f"/>
<rect x="494" y="665" width="14" height="12" fill="#edd255"/>
<path d="M464 689 H498 C503 689 506 691 506 693 C506 695 503 697 498 697 H489 V703 H526 L530 706 L494 721 L464 711 Z" fill="#ecdac6"/>
<rect x="485" y="697" width="10" height="6" rx="3" fill="#c94d4d"/>
<rect x="494" y="697" width="14" height="6" fill="#d9b94a"/><rect x="383.5" y="604.5" width="21.5" height="21.5" rx="2" fill="#fff" stroke="#8c8c8c" stroke-width="1.2"/>
<rect x="384" y="605" width="20.5" height="6" fill="#f4a33d"/>
<text x="394.2" y="622.6" text-anchor="middle" font-family="Liberation Sans" font-size="10" font-weight="bold" fill="#777">24</text></svg>
<div class="t" style="left:322.50px;width:600px;text-align:center;top:228.08px;font-size:25.3px;color:#111;font-weight:normal;">Organisation</div>
<div class="t" style="left:322.50px;width:600px;text-align:center;top:262.93px;font-size:24.3px;color:#111;font-weight:normal;">Fêtes 2023</div>
<div class="t" style="left:73.50px;width:600px;text-align:center;top:394.51px;font-size:24.8px;color:#111;font-weight:normal;">Noël</div>
<div class="t" style="left:414.00px;top:560.01px;font-size:24.8px;color:#111;font-weight:normal;">Organiser le repas</div>
<div class="t" style="left:413.00px;top:608.94px;font-size:14.6px;color:#333;font-weight:normal;">22/12 - 22/12 : 1 jour(s) ouvré(s)</div>
<div class="t" style="left:197.50px;width:600px;text-align:center;top:735.01px;font-size:24.8px;color:#111;font-weight:normal;">Acheter des cadeaux</div>
<div class="t" style="left:429.00px;width:600px;text-align:center;top:505.50px;font-size:25.4px;color:#111;font-weight:normal;">Nouvel An</div>
<div class="a" style="left:1151px;top:163px;width:449px;height:673px;background:#f0f0f0;"></div>
<div class="a" style="left:1152px;top:163px;width:2px;height:650px;background:#c2c2c2;"></div>
<div class="a" style="left:1155px;top:163px;width:2px;height:673px;background:#dedede;"></div>
<div class="a" style="left:1157px;top:163px;width:413px;height:34px;background:#e6e6e6;"></div>
<div class="a" style="left:1157px;top:197px;width:413px;height:274px;background:#f2f2f2;"></div>
<div class="t" style="left:1161.50px;top:171.58px;font-size:19.4px;color:#505050;font-weight:normal;">Bibliothèque - Images</div>
<svg class="a" style="left:1554px;top:175px" width="10" height="10" viewBox="0 0 10 10"><path d="M1 1 L9 9 M9 1 L1 9" stroke="#555" stroke-width="1.3"/></svg>
<div class="a" style="left:1162px;top:201px;width:338px;height:19px;background:#fff;border:1px solid #3d8fe0"></div>
<div class="a" style="left:1166px;top:205px;width:1px;height:11px;background:#222;"></div>
<svg class="a" style="left:1485.5px;top:205px" width="12" height="10" viewBox="0 0 12 10"><path d="M2 3.0 L6 7.0 L10 3.0" fill="none" stroke="#666" stroke-width="1.1"/></svg>
<div class="a" style="left:1504px;top:201px;width:61px;height:18px;background:#e1e1e1;border:1px solid #bdbdbd"></div>
<div class="t" style="left:1234.50px;width:600px;text-align:center;top:205.75px;font-size:10.1px;color:#222;font-weight:normal;">Rechercher</div>
<div class="a" style="left:1161px;top:222px;width:405px;height:250px;background:#fff;border:1px solid #b4b4b4;border-right-color:#c8c8c8"></div>
<div class="a" style="left:1201px;top:258px;width:65px;height:17px;background:#efefef;"></div>
<div class="t" style="left:1203.50px;top:227.63px;font-size:10.6px;color:#1a1a1a;font-weight:normal;transform:scaleX(0.9);transform-origin:0 0">Favoris</div>
<svg class="a" style="left:1181px;top:223.6px" width="18" height="18" viewBox="0 0 18 18"><defs><linearGradient id="stg" x1="0" x2="0" y1="0" y2="1"><stop offset="0" stop-color="#cfe6fb"/><stop offset="0.5" stop-color="#7fb3e8"/><stop offset="1" stop-color="#2f6db5"/></linearGradient></defs><path d="M9 1 L11.3 6.5 L17 7 L12.6 10.8 L14 16.5 L9 13.5 L4 16.5 L5.4 10.8 L1 7 L6.7 6.5 Z" fill="url(#stg)" stroke="#2a5fa0" stroke-width="1" stroke-linejoin="round"/></svg>
<div class="t" style="left:1203.50px;top:244.43px;font-size:10.6px;color:#1a1a1a;font-weight:normal;transform:scaleX(0.9);transform-origin:0 0">CIFORM PARH</div>
<svg class="a" style="left:1168px;top:244.4px" width="10" height="10" viewBox="0 0 10 10"><rect x="0.5" y="0.5" width="9" height="9" rx="1" fill="#f4f4f4" stroke="#a8a8a8" stroke-width="1"/><path d="M5 2.5 V7.5 M2.5 5 H7.5" stroke="#4a6ab0" stroke-width="1"/></svg>
<svg class="a" style="left:1182px;top:240.4px" width="17" height="17" viewBox="0 0 17 17"><defs><linearGradient id="mmg" x1="0" x2="0" y1="0" y2="1"><stop offset="0" stop-color="#f8dca8"/><stop offset="1" stop-color="#eab878"/></linearGradient></defs><rect x="1" y="3" width="15" height="13.5" rx="0.8" fill="url(#mmg)" stroke="#c47840" stroke-width="1"/><rect x="6" y="1" width="5" height="2.2" fill="none" stroke="#e07070" stroke-width="0.9"/><path d="M3.5 14 V5.5 L8.5 11 V14 Z" fill="#ee1c24"/><path d="M8.5 11 L13.5 5.5 V14 H8.5Z" fill="#8a94b0"/><path d="M3.5 5.5 L8.5 11 L13.5 5.5" fill="none" stroke="#fff" stroke-width="0.6" opacity="0.6"/></svg>
<div class="t" style="left:1203.50px;top:261.23px;font-size:10.6px;color:#1a1a1a;font-weight:normal;transform:scaleX(0.9);transform-origin:0 0">MindManager</div>
<svg class="a" style="left:1168px;top:261.2px" width="10" height="10" viewBox="0 0 10 10"><rect x="0.5" y="0.5" width="9" height="9" rx="1" fill="#f4f4f4" stroke="#a8a8a8" stroke-width="1"/><path d="M5 2.5 V7.5 M2.5 5 H7.5" stroke="#4a6ab0" stroke-width="1"/></svg>
<svg class="a" style="left:1182px;top:257.2px" width="17" height="17" viewBox="0 0 17 17"><defs><linearGradient id="mmg" x1="0" x2="0" y1="0" y2="1"><stop offset="0" stop-color="#f8dca8"/><stop offset="1" stop-color="#eab878"/></linearGradient></defs><rect x="1" y="3" width="15" height="13.5" rx="0.8" fill="url(#mmg)" stroke="#c47840" stroke-width="1"/><rect x="6" y="1" width="5" height="2.2" fill="none" stroke="#e07070" stroke-width="0.9"/><path d="M3.5 14 V5.5 L8.5 11 V14 Z" fill="#ee1c24"/><path d="M8.5 11 L13.5 5.5 V14 H8.5Z" fill="#8a94b0"/><path d="M3.5 5.5 L8.5 11 L13.5 5.5" fill="none" stroke="#fff" stroke-width="0.6" opacity="0.6"/></svg>
<div class="t" style="left:1203.50px;top:278.03px;font-size:10.6px;color:#1a1a1a;font-weight:normal;transform:scaleX(0.9);transform-origin:0 0">Images</div>
<svg class="a" style="left:1168px;top:278px" width="10" height="10" viewBox="0 0 10 10"><rect x="0.5" y="0.5" width="9" height="9" rx="1" fill="#f4f4f4" stroke="#a8a8a8" stroke-width="1"/><path d="M5 2.5 V7.5 M2.5 5 H7.5" stroke="#4a6ab0" stroke-width="1"/></svg>
<svg class="a" style="left:1182px;top:274px" width="17" height="16" viewBox="0 0 17 16"><defs><linearGradient id="fdg" x1="0" x2="1" y1="0" y2="1"><stop offset="0" stop-color="#fff1a0"/><stop offset="0.6" stop-color="#f0c040"/><stop offset="1" stop-color="#d08a10"/></linearGradient></defs><path d="M1 2.5 H6 L7.5 4 H15.5 V15 H1 Z" fill="#d9b040"/><path d="M1 5.5 H16 V15.5 H1Z" fill="url(#fdg)"/><path d="M1 15.2 H16" stroke="#5a4a20" stroke-width="1"/></svg>
<div class="a" style="left:1157px;top:471px;width:412px;height:25px;background:#f5f4f2;"></div>
<div class="a" style="left:1352px;top:473px;width:1.5px;height:1.5px;background:#777;"></div>
<div class="a" style="left:1355px;top:473px;width:1.5px;height:1.5px;background:#777;"></div>
<div class="a" style="left:1358px;top:473px;width:1.5px;height:1.5px;background:#777;"></div>
<div class="a" style="left:1361px;top:473px;width:1.5px;height:1.5px;background:#777;"></div>
<div class="t" style="left:1162.50px;top:480.77px;font-size:10.9px;color:#2a78d4;font-weight:normal;">Ajouter Image...</div>
<div class="a" style="left:1161px;top:496px;width:405px;height:246px;background:#fff;border:1px solid #b4b4b4;border-right-color:#c8c8c8"></div>
<div class="a" style="left:1157px;top:742px;width:413px;height:94px;background:#f0f0f0;"></div>
<div class="a" style="left:1158px;top:746.5px;width:412px;height:22.0px;background:#f0f0f0;border:1px solid #d0d0d0;border-right-color:#c4c4c4"></div>
<div class="t" style="left:1166.50px;top:752.57px;font-size:10.9px;color:#333;font-weight:bold;">Icônes</div>
<div class="a" style="left:1158px;top:768.5px;width:412px;height:22.5px;background:#c3c3c3;border:1px solid #d0d0d0;border-right-color:#c4c4c4"></div>
<div class="t" style="left:1166.50px;top:774.82px;font-size:10.9px;color:#333;font-weight:bold;">Images</div>
<div class="a" style="left:1158px;top:791px;width:412px;height:22px;background:#f0f0f0;border:1px solid #d0d0d0;border-right-color:#c4c4c4"></div>
<div class="t" style="left:1166.50px;top:797.07px;font-size:10.9px;color:#333;font-weight:bold;">Images d'arrière-plan</div>
<div class="a" style="left:1158px;top:813px;width:412px;height:22px;background:#f0f0f0;border:1px solid #d0d0d0;border-right-color:#c4c4c4"></div>
<div class="t" style="left:1166.50px;top:819.07px;font-size:10.9px;color:#333;font-weight:bold;">Formes de sujet</div>
<div class="a" style="left:1171px;top:762px;width:5px;height:1px;background:#555;"></div>
<div class="a" style="left:1167px;top:784.5px;width:4px;height:1px;background:#555;"></div>
<div class="a" style="left:1228px;top:807px;width:6px;height:1px;background:#555;"></div>
<div class="a" style="left:1166px;top:828.5px;width:6px;height:1px;background:#555;"></div>
<div class="a" style="left:1569px;top:163px;width:31px;height:673px;background:#ececec;"></div>
<div class="a" style="left:1569px;top:163px;width:1px;height:673px;background:#c4c4c4;"></div>
<div class="a" style="left:1598px;top:180px;width:1px;height:656px;background:#b4b4b4;"></div>
<div class="a" style="left:1599px;top:163px;width:1px;height:673px;background:#e4e4e4;"></div>
<div class="a" style="left:1570px;top:178px;width:28px;height:30.5px;background:#e9e9e9;border-bottom:1px solid #d0d0d0;border-top:1px solid #cfcfcf"></div>
<svg class="a" style="left:1592px;top:178px" width="6" height="6" viewBox="0 0 6 6"><path d="M0 0 H6 V6 Z" fill="#ececec"/><path d="M0 0 L6 6" stroke="#cfcfcf" stroke-width="0.8"/></svg>
<div class="a" style="left:1570px;top:208px;width:28px;height:30.5px;background:#e9e9e9;border-bottom:1px solid #d0d0d0;border-top:1px solid #cfcfcf"></div>
<svg class="a" style="left:1592px;top:208px" width="6" height="6" viewBox="0 0 6 6"><path d="M0 0 H6 V6 Z" fill="#ececec"/><path d="M0 0 L6 6" stroke="#cfcfcf" stroke-width="0.8"/></svg>
<div class="a" style="left:1570px;top:238px;width:28px;height:30.5px;background:#e9e9e9;border-bottom:1px solid #d0d0d0;border-top:1px solid #cfcfcf"></div>
<svg class="a" style="left:1592px;top:238px" width="6" height="6" viewBox="0 0 6 6"><path d="M0 0 H6 V6 Z" fill="#ececec"/><path d="M0 0 L6 6" stroke="#cfcfcf" stroke-width="0.8"/></svg>
<div class="a" style="left:1570px;top:268.5px;width:28px;height:30.5px;background:#e9e9e9;border-bottom:1px solid #d0d0d0;border-top:1px solid #cfcfcf"></div>
<svg class="a" style="left:1592px;top:268.5px" width="6" height="6" viewBox="0 0 6 6"><path d="M0 0 H6 V6 Z" fill="#ececec"/><path d="M0 0 L6 6" stroke="#cfcfcf" stroke-width="0.8"/></svg>
<div class="a" style="left:1570px;top:299px;width:28px;height:30.5px;background:#e9e9e9;border-bottom:1px solid #d0d0d0;border-top:1px solid #cfcfcf"></div>
<svg class="a" style="left:1592px;top:299px" width="6" height="6" viewBox="0 0 6 6"><path d="M0 0 H6 V6 Z" fill="#ececec"/><path d="M0 0 L6 6" stroke="#cfcfcf" stroke-width="0.8"/></svg>
<div class="a" style="left:1569px;top:330px;width:28px;height:30.5px;background:#fbfbfb;border-bottom:1px solid #d0d0d0;border-top:1px solid #cfcfcf"></div>
<svg class="a" style="left:1592px;top:330px" width="6" height="6" viewBox="0 0 6 6"><path d="M0 0 H6 V6 Z" fill="#ececec"/><path d="M0 0 L6 6" stroke="#cfcfcf" stroke-width="0.8"/></svg>
<div class="a" style="left:1570px;top:360px;width:28px;height:30.5px;background:#e9e9e9;border-bottom:1px solid #d0d0d0;border-top:1px solid #cfcfcf"></div>
<svg class="a" style="left:1592px;top:360px" width="6" height="6" viewBox="0 0 6 6"><path d="M0 0 H6 V6 Z" fill="#ececec"/><path d="M0 0 L6 6" stroke="#cfcfcf" stroke-width="0.8"/></svg>
<div class="a" style="left:1570px;top:391px;width:28px;height:30.5px;background:#e9e9e9;border-bottom:1px solid #d0d0d0;border-top:1px solid #cfcfcf"></div>
<svg class="a" style="left:1592px;top:391px" width="6" height="6" viewBox="0 0 6 6"><path d="M0 0 H6 V6 Z" fill="#ececec"/><path d="M0 0 L6 6" stroke="#cfcfcf" stroke-width="0.8"/></svg>
<div class="a" style="left:1570px;top:421px;width:28px;height:30.5px;background:#e9e9e9;border-bottom:1px solid #d0d0d0;border-top:1px solid #cfcfcf"></div>
<svg class="a" style="left:1592px;top:421px" width="6" height="6" viewBox="0 0 6 6"><path d="M0 0 H6 V6 Z" fill="#ececec"/><path d="M0 0 L6 6" stroke="#cfcfcf" stroke-width="0.8"/></svg>
<div class="a" style="left:1570px;top:452px;width:28px;height:30.5px;background:#e9e9e9;border-bottom:1px solid #d0d0d0;border-top:1px solid #cfcfcf"></div>
<svg class="a" style="left:1592px;top:452px" width="6" height="6" viewBox="0 0 6 6"><path d="M0 0 H6 V6 Z" fill="#ececec"/><path d="M0 0 L6 6" stroke="#cfcfcf" stroke-width="0.8"/></svg>
<div class="a" style="left:1570px;top:482px;width:28px;height:30.5px;background:#e9e9e9;border-bottom:1px solid #d0d0d0;border-top:1px solid #cfcfcf"></div>
<svg class="a" style="left:1592px;top:482px" width="6" height="6" viewBox="0 0 6 6"><path d="M0 0 H6 V6 Z" fill="#ececec"/><path d="M0 0 L6 6" stroke="#cfcfcf" stroke-width="0.8"/></svg>
<div class="a" style="left:1570px;top:513px;width:28px;height:30.5px;background:#e9e9e9;border-bottom:1px solid #d0d0d0;border-top:1px solid #cfcfcf"></div>
<svg class="a" style="left:1592px;top:513px" width="6" height="6" viewBox="0 0 6 6"><path d="M0 0 H6 V6 Z" fill="#ececec"/><path d="M0 0 L6 6" stroke="#cfcfcf" stroke-width="0.8"/></svg>
<div class="a" style="left:1570px;top:543px;width:28px;height:293px;background:#ebebeb;"></div>
<svg class="a" style="left:1574px;top:183px" width="20" height="20" viewBox="0 0 20 20"><path d="M2 3 H8 L9.5 5 H18 V18 H2 Z" fill="#fff" stroke="#555" stroke-width="1.2"/><rect x="2.5" y="8" width="15" height="9.5" fill="#2d5fc4"/><path d="M7 9.5 V16 L10 12.5 V16 H13 V9.5 L10 13 Z" fill="#fff"/></svg>
<svg class="a" style="left:1574px;top:213px" width="20" height="20" viewBox="0 0 20 20"><rect x="2" y="1" width="9" height="9" rx="1.5" fill="#d03b3b"/><text x="5.5" y="8.5" font-family="Liberation Sans" font-size="7" font-weight="bold" fill="#fff">1</text><circle cx="12.5" cy="12" r="6" fill="#5cb85c" stroke="#f0f0f0" stroke-width="1"/><path d="M9.5 12 L12 14.5 L15.5 10" fill="none" stroke="#fff" stroke-width="1.6"/></svg>
<svg class="a" style="left:1574px;top:243px" width="20" height="20" viewBox="0 0 20 20"><rect x="2" y="4" width="15" height="13" rx="1" fill="#fff" stroke="#777" stroke-width="1.1"/><rect x="2.5" y="4.5" width="14" height="3" fill="#f4a33d"/><path d="M5 2.5 V6 M14 2.5 V6" stroke="#777" stroke-width="1"/><path d="M6 12 L8 14 L11 10.5" fill="none" stroke="#5cb85c" stroke-width="1.4"/><path d="M14.5 12 V18 M11.5 15 H17.5" stroke="#5cb85c" stroke-width="1.3"/></svg>
<svg class="a" style="left:1574px;top:273px" width="20" height="20" viewBox="0 0 20 20"><circle cx="10" cy="5" r="3" fill="none" stroke="#8a8a8a" stroke-width="1.2"/><path d="M2 17.5 C2 11 5 8.5 10 8.5 C15 8.5 18 11 18 17.5 Z" fill="none" stroke="#8a8a8a" stroke-width="1.2"/></svg>
<svg class="a" style="left:1574px;top:304px" width="20" height="20" viewBox="0 0 20 20"><rect x="2" y="7" width="6" height="5" rx="2.5" fill="none" stroke="#777" stroke-width="1.1"/><rect x="11" y="2" width="7" height="4" rx="2" fill="none" stroke="#777" stroke-width="1.1"/><rect x="11" y="9" width="7" height="4" rx="2" fill="none" stroke="#777" stroke-width="1.1"/><path d="M8 9.5 H10 V4 H11 M10 9.5 V11 H11 M10 11 V15" fill="none" stroke="#777" stroke-width="1"/><path d="M15 14 V19 M12.5 16.5 H17.5" stroke="#5cb85c" stroke-width="1.3"/></svg>
<svg class="a" style="left:1574px;top:335px" width="20" height="20" viewBox="0 0 20 20"><rect x="1.5" y="3" width="12" height="12" fill="#6fa8e0" stroke="#777" stroke-width="1"/><path d="M2 14 L6 8 L9 12 L11 10 L13 14Z" fill="#7b8fa8"/><path d="M14 5 H16 V15 M16 7 H18 V17 H6 V15" fill="none" stroke="#888" stroke-width="1"/><path d="M15 14 V19 M12.5 16.5 H17.5" stroke="#5cb85c" stroke-width="1.4"/></svg>
<svg class="a" style="left:1574px;top:365px" width="20" height="20" viewBox="0 0 20 20"><circle cx="8.5" cy="8.5" r="6" fill="none" stroke="#666" stroke-width="1.6"/><path d="M13 13 L18 18" stroke="#666" stroke-width="2.6"/></svg>
<svg class="a" style="left:1574px;top:396px" width="20" height="20" viewBox="0 0 20 20"><rect x="2" y="2" width="16" height="16" rx="2" fill="#2d5fc4"/><path d="M5 7 V5 H7 M13 5 H15 V7 M15 13 V15 H13 M7 15 H5 V13" fill="none" stroke="#fff" stroke-width="1.3"/><rect x="7" y="7" width="6" height="6" fill="#fff"/><path d="M8 8 V12 L10 10 V12 H12 V8 L10 10Z" fill="#2d5fc4"/></svg>
<svg class="a" style="left:1574px;top:426px" width="20" height="20" viewBox="0 0 20 20"><rect x="2" y="2" width="9" height="8" fill="#fff" stroke="#888" stroke-width="1"/><rect x="6" y="7" width="12" height="10" rx="1" fill="#fff" stroke="#3d85d6" stroke-width="1.4"/><path d="M9 12 H15" stroke="#3d85d6" stroke-width="2"/></svg>
<svg class="a" style="left:1574px;top:457px" width="20" height="20" viewBox="0 0 20 20"><rect x="9" y="5" width="9" height="10" fill="#fff" stroke="#3d85d6" stroke-width="1"/><path d="M9 6 L13.5 10 L18 6" fill="none" stroke="#3d85d6" stroke-width="1"/><path d="M1.5 3.5 L11 1.5 V18.5 L1.5 16.5 Z" fill="#0a64c6"/><ellipse cx="6" cy="10" rx="2.5" ry="3.2" fill="none" stroke="#fff" stroke-width="1.4"/></svg>
<svg class="a" style="left:1574px;top:487px" width="20" height="20" viewBox="0 0 20 20"><circle cx="10" cy="10" r="8" fill="#8a8a8a"/><path d="M2 10 H18 M10 2 V18 M4 5.5 H16 M4 14.5 H16" stroke="#e9e9e9" stroke-width="0.9"/><ellipse cx="10" cy="10" rx="3.5" ry="8" fill="none" stroke="#e9e9e9" stroke-width="0.9"/></svg>
<svg class="a" style="left:1574px;top:518px" width="20" height="20" viewBox="0 0 20 20"><rect x="8" y="3" width="10" height="14" fill="#fff" stroke="#5a9a3a" stroke-width="0.8"/><path d="M10 6 H16 M10 9 H16 M10 12 H16 M13 4 V16" stroke="#7cb85a" stroke-width="1" stroke-dasharray="1.5 1"/><path d="M1.5 3 L11 1.5 V18.5 L1.5 17 Z" fill="#1f7a3a"/><path d="M4 7 L8 13 M8 7 L4 13" stroke="#fff" stroke-width="1.5"/></svg>
<div class="a" style="left:0px;top:813px;width:1157px;height:23px;background:#e6e6e6;"></div>
<div class="a" style="left:244px;top:813px;width:913px;height:1px;background:#d0d0d0;"></div>
<div class="a" style="left:0px;top:834px;width:1157px;height:2px;background:#dcdcdc;"></div>
<svg class="a" style="left:0;top:813px" width="250" height="23" viewBox="0 0 250 23"><path d="M14 0.5 H244 V20.5 H34 Z" fill="#fbfbfb" stroke="#d0d0d0" stroke-width="1"/><path d="M14 0.5 L34 20.5" stroke="#c8c8c8" stroke-width="1"/></svg>
<svg class="a" style="left:3px;top:819px" width="8" height="12" viewBox="0 0 8 12"><path d="M6.5 1 L1.5 6 L6.5 11 Z" fill="none" stroke="#999" stroke-width="1"/></svg>
<svg class="a" style="left:43px;top:815px" width="14" height="17" viewBox="0 0 14 17"><path d="M2 0.5 H9 L13 4.5 V14 Q13 15.5 11.5 15.5 H2 Q0.5 15.5 0.5 14 V2 Q0.5 0.5 2 0.5 Z" fill="#3d5cbd"/><path d="M9 0.5 L13 4.5 H9 Z" fill="#eef1fa"/><path d="M2.3 14 V6.3 H4.8 L6.8 10 L8.8 6.3 H11.3 V14 Z" fill="#fff"/><path d="M6.8 10 L8.8 6.3 H11.3 V14 H5.2 Z" fill="#c4c4c4"/></svg>
<div class="t" style="left:67.50px;top:819.45px;font-size:11.05px;color:#333;font-weight:bold;">Organisation Fêtes 2023*</div>
<svg class="a" style="left:211px;top:819px" width="10" height="10" viewBox="0 0 10 10"><path d="M1.5 5 V1.5 H5" fill="none" stroke="#888" stroke-width="1"/><path d="M3.5 3.5 L8 8 M5 8.2 H8.2 V5" fill="none" stroke="#666" stroke-width="1.2"/></svg>
<svg class="a" style="left:229px;top:818px" width="11" height="11" viewBox="0 0 11 11"><path d="M1.5 1.5 L9.5 9.5 M9.5 1.5 L1.5 9.5" stroke="#555" stroke-width="1.3"/></svg>
<svg class="a" style="left:1138px;top:819px" width="8" height="12" viewBox="0 0 8 12"><path d="M1.5 1 L6.5 6 L1.5 11 Z" fill="none" stroke="#999" stroke-width="1"/></svg>
<div class="a" style="left:0px;top:836px;width:1600px;height:22px;background:#f0f0f0;"></div>
<svg class="a" style="left:1111px;top:838px" width="20" height="20" viewBox="0 0 20 20"><path d="M1 3 H17 L11 10 V18 L7 16 V10 Z" fill="#6a6a6a"/><path d="M13 4 L8 10" stroke="#aaa" stroke-width="0.8"/></svg>
<svg class="a" style="left:1129px;top:845px" width="6" height="4" viewBox="0 0 6 4"><path d="M0 0.5 H6 L3 3.5Z" fill="#555"/></svg>
<svg class="a" style="left:1142px;top:838px" width="20" height="20" viewBox="0 0 20 20"><path d="M1 3 H17 L11 10 V18 L7 16 V10 Z" fill="#6a6a6a"/><path d="M12 10 L15 12 L12 14 L16 18" stroke="#6a6a6a" stroke-width="2" fill="none"/></svg>
<svg class="a" style="left:1160px;top:845px" width="6" height="4" viewBox="0 0 6 4"><path d="M0 0.5 H6 L3 3.5Z" fill="#555"/></svg>
<svg class="a" style="left:1180px;top:838px" width="20" height="20" viewBox="0 0 20 20"><circle cx="10" cy="11" r="7.5" fill="none" stroke="#666" stroke-width="1.5"/><path d="M10 7 V15 M6 11 H14" stroke="#666" stroke-width="1.8"/><path d="M12 1.5 L15 4 L11.5 5" fill="#666"/></svg>
<svg class="a" style="left:1200px;top:845px" width="6" height="4" viewBox="0 0 6 4"><path d="M0 0.5 H6 L3 3.5Z" fill="#555"/></svg>
<svg class="a" style="left:1211px;top:838px" width="20" height="20" viewBox="0 0 20 20"><rect x="3" y="3" width="14" height="14" rx="2" fill="none" stroke="#ccc" stroke-width="1.2"/><path d="M6 6 L8 8 M14 6 L12 8 M6 14 L8 12 M14 14 L12 12" stroke="#ccc" stroke-width="1"/><circle cx="10" cy="10" r="1.5" fill="#ccc"/></svg>
<svg class="a" style="left:1235px;top:838px" width="20" height="20" viewBox="0 0 20 20"><rect x="2.5" y="2.5" width="15" height="15" rx="2" fill="none" stroke="#666" stroke-width="1.2"/><path d="M5.5 6 H13 M5.5 9 H14.5 M5.5 12 H11 M5.5 15 H13" stroke="#666" stroke-width="1"/></svg>
<svg class="a" style="left:1259px;top:838px" width="20" height="20" viewBox="0 0 20 20"><rect x="2" y="2.5" width="16" height="15" rx="1.5" fill="#fff" stroke="#666" stroke-width="1.2"/><rect x="2.5" y="3" width="15" height="3.5" fill="#666"/><text x="10" y="15.5" text-anchor="middle" font-family="Liberation Sans" font-size="7.5" font-weight="bold" fill="#555">24</text></svg>
<svg class="a" style="left:1284px;top:838px" width="20" height="20" viewBox="0 0 20 20"><rect x="2" y="2" width="16" height="16" rx="2" fill="none" stroke="#555" stroke-width="1.3"/><circle cx="8" cy="8" r="3.2" fill="none" stroke="#555" stroke-width="1.5"/><circle cx="12" cy="12" r="3.2" fill="none" stroke="#555" stroke-width="1.5"/></svg>
<svg class="a" style="left:1309px;top:838px" width="20" height="20" viewBox="0 0 20 20"><rect x="2" y="2" width="16" height="16" rx="2" fill="none" stroke="#555" stroke-width="1.3"/><path d="M5 13 L11 5 H15 V9 L9 16 Z" fill="none" stroke="#555" stroke-width="1.4"/></svg>
<svg class="a" style="left:1334px;top:838px" width="20" height="20" viewBox="0 0 20 20"><rect x="2" y="2" width="16" height="16" rx="1" fill="none" stroke="#555" stroke-width="1.2"/><path d="M2 5.5 H18" stroke="#555" stroke-width="1.2"/><path d="M5 2 V18 M5 9 H14 M5 12 H11" stroke="#555" stroke-width="1"/><path d="M11 11 L16 16 M13 16 H16 V13" stroke="#555" stroke-width="1.2" fill="none"/></svg>
<div class="t" style="left:1078.00px;width:600px;text-align:center;top:841.93px;font-size:11.3px;color:#555;font-weight:normal;">133 %</div>
<div class="a" style="left:1409px;top:847px;width:7px;height:1px;background:#888;"></div>
<div class="a" style="left:1428px;top:847px;width:85px;height:1px;background:#bbb;"></div>
<div class="a" style="left:1472px;top:840px;width:5px;height:14px;background:#eee;border:1px solid #999"></div>
<svg class="a" style="left:1522px;top:842px" width="12" height="12" viewBox="0 0 12 12"><path d="M6 1 V11 M1 6 H11" stroke="#777" stroke-width="1.2"/></svg>
<svg class="a" style="left:1539px;top:838px" width="20" height="20" viewBox="0 0 20 20"><rect x="2.5" y="2.5" width="15" height="15" rx="1" fill="none" stroke="#666" stroke-width="1.2"/><path d="M5.5 7 V5.5 H7 M13 5.5 H14.5 V7 M14.5 13 V14.5 H13 M7 14.5 H5.5 V13" fill="none" stroke="#888" stroke-width="1"/><circle cx="10" cy="10" r="1.3" fill="#888"/></svg>
<div class="a" style="left:1566px;top:836px;width:34px;height:22px;background:#dadada;"></div>
<svg class="a" style="left:1570px;top:838px" width="20" height="20" viewBox="0 0 20 20"><rect x="2" y="3" width="15" height="15" fill="#6a6a6a"/><rect x="11" y="4.5" width="4.5" height="12" fill="#dadada"/><path d="M11 3 H17 V18" fill="none" stroke="#6a6a6a" stroke-width="1.2"/></svg>
<svg class="a" style="left:1590px;top:845px" width="6" height="4" viewBox="0 0 6 4"><path d="M0 0.5 H6 L3 3.5Z" fill="#555"/></svg>
<div class="a" style="left:0px;top:34px;width:1px;height:824px;background:#a4a4a4;"></div>
</body></html>
